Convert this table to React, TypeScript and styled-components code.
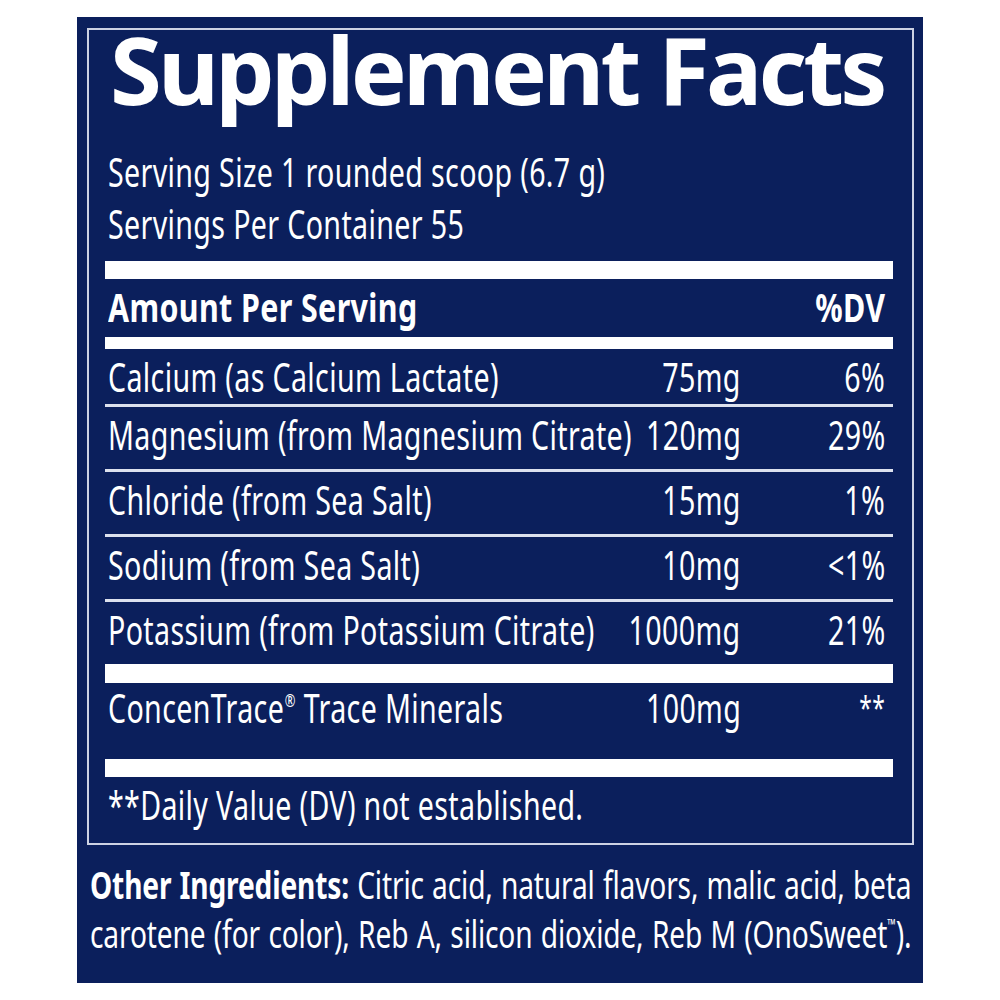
import React from 'react'
import styled, { createGlobalStyle } from 'styled-components'

type Nutrient = {
  name: React.ReactNode
  amount: string
  dv: string
}

const nutrients: Nutrient[] = [
  { name: 'Calcium (as Calcium Lactate)', amount: '75mg', dv: '6%' },
  { name: 'Magnesium (from Magnesium Citrate)', amount: '120mg', dv: '29%' },
  { name: 'Chloride (from Sea Salt)', amount: '15mg', dv: '1%' },
  { name: 'Sodium (from Sea Salt)', amount: '10mg', dv: '<1%' },
  { name: 'Potassium (from Potassium Citrate)', amount: '1000mg', dv: '21%' },
]

// the label uses a condensed face; no condensed face is installed, so text is squeezed
const REGULAR = 0.715
const BOLD = 0.76

export default function App() {
  return (
    <>
      <GlobalStyle />
      <Label>
        <Frame>
          <Title>Supplement Facts</Title>
          <ServingInfo>
            <div>
              <Squeeze>Serving Size 1 rounded scoop (6.7 g)</Squeeze>
            </div>
            <div>
              <Squeeze>Servings Per Container 55</Squeeze>
            </div>
          </ServingInfo>
          <Bar $height={18} $gap={11} />
          <HeaderRow>
            <NameCell>
              <Squeeze $scale={BOLD}>Amount Per Serving</Squeeze>
            </NameCell>
            <span />
            <DvCell>
              <Squeeze $scale={BOLD} $align="right">%DV</Squeeze>
            </DvCell>
          </HeaderRow>
          <Bar $height={12} $gap={4} />
          {nutrients.map((n, i) => (
            <NutrientRow key={i} $first={i === 0} $last={i === nutrients.length - 1}>
              <NameCell>
                <Squeeze>{n.name}</Squeeze>
              </NameCell>
              <AmountCell>
                <Squeeze $align="right">{n.amount}</Squeeze>
              </AmountCell>
              <DvCell>
                <Squeeze $align="right">{n.dv}</Squeeze>
              </DvCell>
            </NutrientRow>
          ))}
          <Bar $height={19} $gap={0} />
          <TraceRow>
            <NameCell>
              <Squeeze>
                ConcenTrace<Reg>®</Reg> Trace Minerals
              </Squeeze>
            </NameCell>
            <AmountCell>
              <Squeeze $align="right">100mg</Squeeze>
            </AmountCell>
            <DvCell>
              <Squeeze $align="right">
                <Stars>**</Stars>
              </Squeeze>
            </DvCell>
          </TraceRow>
          <Bar $height={18} $gap={18} />
          <Footnote>
            <Squeeze>**Daily Value (DV) not established.</Squeeze>
          </Footnote>
        </Frame>
        <Ingredients>
          <strong>Other Ingredients:</strong> Citric acid, natural flavors, malic acid, beta
          <br />
          carotene (for color), Reb A, silicon dioxide, Reb M (OnoSweet<Tm>™</Tm>).
        </Ingredients>
      </Label>
    </>
  )
}

const GlobalStyle = createGlobalStyle`
  html, body {
    margin: 0;
    padding: 0;
    background: #ffffff;
  }
  html {
    overflow: hidden;
  }
  body {
    font-family: "Noto Sans", "Liberation Sans", sans-serif;
  }
`

const Label = styled.div`
  box-sizing: border-box;
  width: 846px;
  height: 966px;
  margin: 17px 0 0 77px;
  padding: 11px 9px 0 10px;
  background: #0b1f5c;
  color: #ffffff;
  display: flex;
  flex-direction: column;
`

const Frame = styled.div`
  box-sizing: border-box;
  height: 817px;
  flex-shrink: 0;
  border: 2px solid #cdd2e3;
  padding: 0 19px 0 16px;
  display: flex;
  flex-direction: column;
  font-family: "Noto Sans", sans-serif;
  font-size: 40px;
  letter-spacing: 0.5px;
`

const Squeeze = styled.span<{ $scale?: number; $align?: 'left' | 'right' }>`
  display: inline-block;
  white-space: nowrap;
  transform: scaleX(${(p) => p.$scale ?? REGULAR});
  transform-origin: ${(p) => (p.$align === 'right' ? 'right' : 'left')} center;
`

const Title = styled.h1`
  margin: -11px 0 0 5px;
  font-family: "Noto Sans", sans-serif;
  font-size: 94px;
  font-weight: 700;
  line-height: 100px;
  letter-spacing: -3.8px;
  white-space: nowrap;
`

const ServingInfo = styled.div`
  margin-top: 27px;
  padding-left: 3px;
  line-height: 52px;
`

const Bar = styled.div<{ $height: number; $gap: number }>`
  height: ${(p) => p.$height}px;
  margin-top: ${(p) => p.$gap}px;
  background: #ffffff;
  flex-shrink: 0;
`

const HeaderRow = styled.div`
  margin-top: 2px;
  display: grid;
  grid-template-columns: minmax(0, 1fr) auto 152px;
  line-height: 52px;
  font-weight: 700;
`

const NutrientRow = styled.div<{ $first: boolean; $last: boolean }>`
  display: grid;
  grid-template-columns: minmax(0, 1fr) auto 152px;
  line-height: 55px;
  height: ${(p) => (p.$first ? 55 : 62)}px;
  border-bottom: ${(p) => (p.$last ? 'none' : '3px solid #dde1ee')};
  flex-shrink: 0;
`

const TraceRow = styled.div`
  display: grid;
  grid-template-columns: minmax(0, 1fr) auto 152px;
  line-height: 50px;
`

const NameCell = styled.span`
  min-width: 0;
  padding-left: 3px;
  text-align: left;
`

const AmountCell = styled.span`
  text-align: right;
`

const DvCell = styled.span`
  text-align: right;
  padding-right: 8px;
`

const Reg = styled.sup`
  font-size: 0.45em;
  vertical-align: 0.9em;
  line-height: 0;
  margin-left: 1px;
`

const Stars = styled.span`
  font-size: 0.8em;
  vertical-align: 0.35em;
`

const Footnote = styled.div`
  padding-left: 3px;
  line-height: 55px;
`

const Ingredients = styled.p`
  flex-shrink: 0;
  width: 1110px;
  margin: 15px 0 0 3px;
  transform: scaleX(0.74);
  transform-origin: left top;
  font-family: "Noto Sans", sans-serif;
  font-size: 38px;
  line-height: 49px;
  letter-spacing: -0.2px;
  text-align: justify;
  text-align-last: justify;
  white-space: nowrap;

  strong {
    font-weight: 700;
  }
`

const Tm = styled.sup`
  font-size: 0.4em;
  vertical-align: 1.2em;
  line-height: 0;
`
